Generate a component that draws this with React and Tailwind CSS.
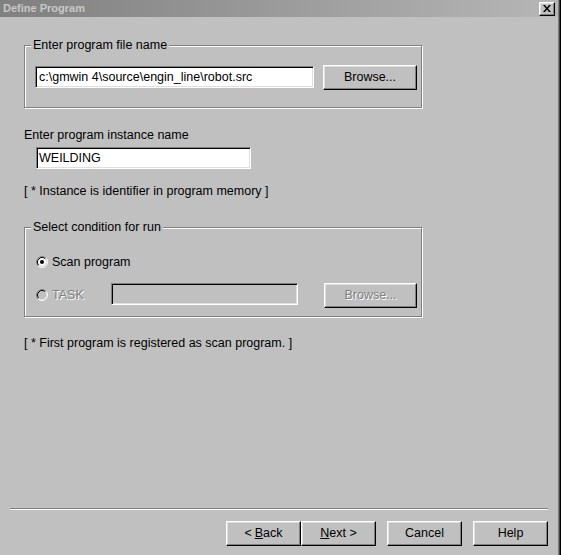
import React from "react";

const btn =
  "flex items-center justify-center bg-[#c0c0c0] border border-t-white border-l-white border-r-black border-b-black shadow-[inset_-1px_-1px_0_#808080,inset_1px_1px_0_#dfdfdf]";
const sunken =
  "border border-t-[#808080] border-l-[#808080] border-r-white border-b-white shadow-[inset_1px_1px_0_#000,inset_-1px_-1px_0_#dfdfdf]";
const fieldset =
  "border border-[#808080] shadow-[1px_1px_0_#fff,inset_1px_1px_0_#fff] pl-[6px] pr-0 m-0";
const legend = "px-[2px] bg-[#c0c0c0] leading-[16px]";

function Radio({ checked, disabled }) {
  return (
    <svg width="12" height="12" viewBox="0 0 12 12" className="shrink-0">
      <circle cx="6" cy="6" r="4" fill={disabled ? "#c0c0c0" : "#fff"} />
      <path d="M2.11 9.89 A5.5 5.5 0 0 1 9.89 2.11" stroke="#808080" fill="none" />
      <path d="M9.89 2.11 A5.5 5.5 0 0 1 2.11 9.89" stroke="#fff" fill="none" />
      <path d="M2.82 9.18 A4.5 4.5 0 0 1 9.18 2.82" stroke="#000" fill="none" />
      <path d="M9.18 2.82 A4.5 4.5 0 0 1 2.82 9.18" stroke="#dfdfdf" fill="none" />
      {checked && <circle cx="6" cy="6" r="2" fill="#000" />}
    </svg>
  );
}

export default function App() {
  return (
    <div className="w-[561px] h-[555px] bg-[#c0c0c0] flex flex-col overflow-hidden text-[12.5px] text-black font-['Liberation_Sans',Arial,sans-serif] shadow-[inset_-1px_0_0_#000,inset_-2px_0_0_#404040,inset_-3px_0_0_#808080]">
      {/* Title bar */}
      <div className="h-[17px] w-[558px] shrink-0 flex items-center justify-between bg-linear-to-r from-[#808080] to-[#b6b6b6]">
        <span className="pl-[3px] font-bold text-[11px] text-[#c8c8c8] leading-[17px]">
          Define Program
        </span>
        <div className={`${btn} w-[16px] h-[14px] mr-[3px]`}>
          <svg width="8" height="7" viewBox="0 0 8 7">
            <path d="M0 0 L2 0 L4 2.5 L6 0 L8 0 L5 3.5 L8 7 L6 7 L4 4.5 L2 7 L0 7 L3 3.5 Z" fill="#000" />
          </svg>
        </div>
      </div>

      {/* Main content */}
      <div className="flex-1 flex flex-col items-start pl-[24px]">
        <fieldset className={`${fieldset} w-[398px] mt-[20px] pb-[17px]`}>
          <legend className={legend}>Enter program file name</legend>
          <div className="flex items-start mt-[12px] ml-[4px]">
            <div className={`${sunken} w-[279px] h-[22px] mt-[1px] bg-white flex items-center pl-[3px] leading-[14px]`}>
              {"c:\\gmwin 4\\source\\engin_line\\robot.src"}
            </div>
            <div className={`${btn} w-[94px] h-[25px] ml-[9px]`}>Browse...</div>
          </div>
        </fieldset>

        <div className="mt-[20px] leading-[14px]">Enter program instance name</div>
        <div className={`${sunken} w-[215px] h-[22px] mt-[5px] ml-[12px] bg-white flex items-center pl-[2px] leading-[14px]`}>
          WEILDING
        </div>
        <div className="mt-[15px] leading-[14px]">[ * Instance is identifier in program memory ]</div>

        <fieldset className={`${fieldset} w-[398px] mt-[21px] pb-[8px]`}>
          <legend className={legend}>Select condition for run</legend>
          <div className="flex items-center mt-[20px] ml-[5px] h-[14px]">
            <Radio checked />
            <span className="ml-[4px] leading-[14px]">Scan program</span>
          </div>
          <div className="flex items-start mt-[14px]">
            <div className="flex items-center w-[80px] pl-[5px] mt-[5px] h-[14px]">
              <Radio disabled />
              <span className="ml-[4px] leading-[14px] text-[#808080] [text-shadow:1px_1px_0_#fff]">TASK</span>
            </div>
            <div className={`${sunken} w-[187px] h-[22px] bg-[#c0c0c0]`} />
            <div className={`${btn} w-[93px] h-[25px] ml-[26px] text-[#808080] [text-shadow:1px_1px_0_#fff]`}>
              Browse...
            </div>
          </div>
        </fieldset>

        <div className="mt-[19px] leading-[14px]">[ * First program is registered as scan program. ]</div>
      </div>

      {/* Footer */}
      <div className="shrink-0 flex flex-col">
        <div className="ml-[10px] mr-[13px] h-[2px] border-t border-t-[#808080] border-b border-b-white" />
        <div className="flex justify-end pr-[13px] mt-[11px] mb-[9px]">
          <div className={`${btn} w-[75px] h-[25px]`}>
            &lt; <span className="underline ml-[3px]">B</span>ack
          </div>
          <div className={`${btn} w-[75px] h-[25px]`}>
            <span className="underline">N</span>ext &gt;
          </div>
          <div className={`${btn} w-[75px] h-[25px] ml-[11px]`}>Cancel</div>
          <div className={`${btn} w-[75px] h-[25px] ml-[11px]`}>Help</div>
        </div>
      </div>
    </div>
  );
}
